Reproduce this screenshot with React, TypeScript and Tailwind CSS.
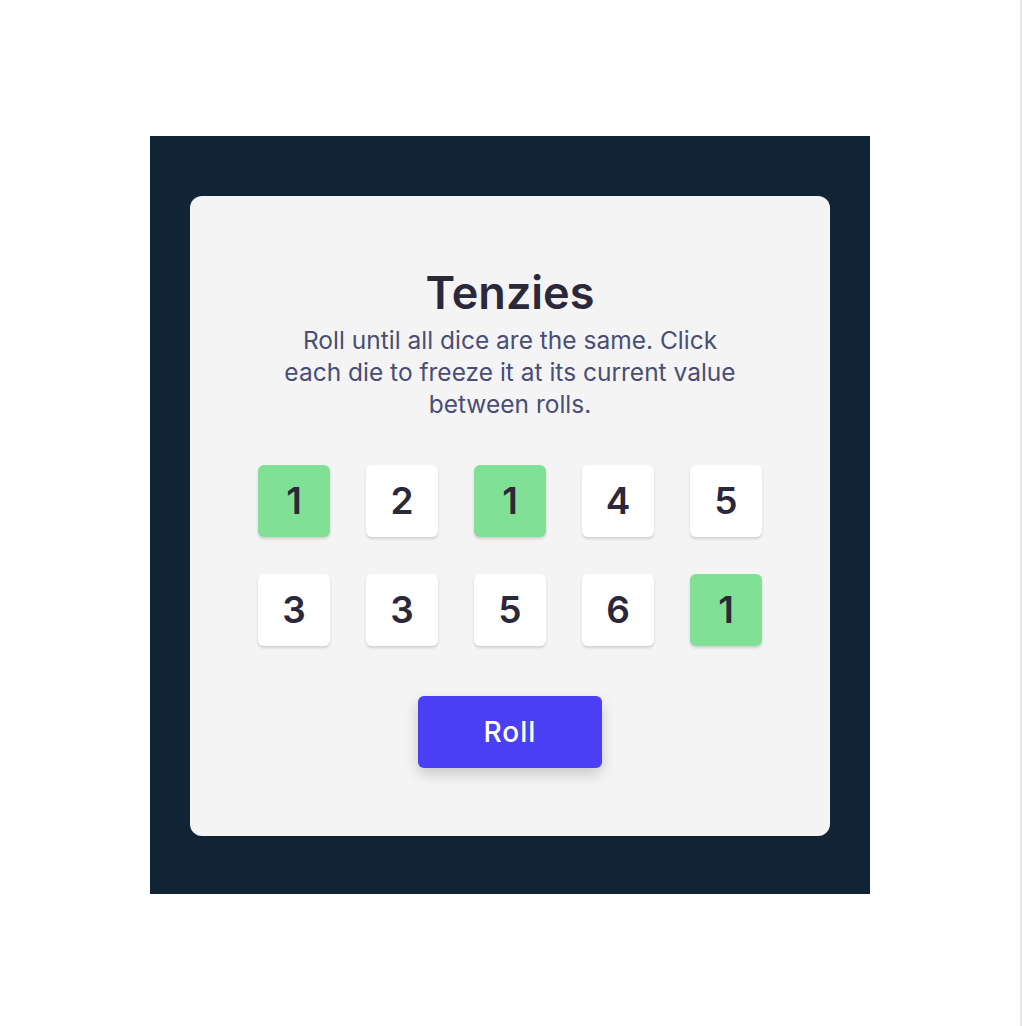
import React from 'react';

const dice = [
  { value: 1, held: true },
  { value: 2, held: false },
  { value: 1, held: true },
  { value: 4, held: false },
  { value: 5, held: false },
  { value: 3, held: false },
  { value: 3, held: false },
  { value: 5, held: false },
  { value: 6, held: false },
  { value: 1, held: true },
];

function Die({ value, held }: { value: number; held: boolean }) {
  return (
    <button
      className={
        'w-[72px] h-[72px] rounded-[6px] flex items-center justify-center text-[37px] font-semibold text-[#2b283a] shadow-[0_2px_3px_rgba(0,0,0,0.15)] ' +
        (held ? 'bg-[#80e096]' : 'bg-white')
      }
    >
      {value}
    </button>
  );
}

export default function App() {
  return (
    <div className="flex min-h-[1026px] bg-white font-['Inter',sans-serif]">
      <div className="flex-1 flex justify-center pt-[136px]">
        <main className="w-[720px] h-[758px] bg-[#112436] pt-[60px] px-[40px]">
          <div className="w-[640px] h-[640px] rounded-[12px] bg-[#f4f4f4] flex flex-col items-center pt-[69px]">
            <h1 className="text-[45px] leading-[56px] font-semibold text-[#2b283a]">Tenzies</h1>
            <p className="mt-[3px] w-[470px] text-center text-[24.5px] leading-[32px] text-[#4a4e74]">
              Roll until all dice are the same. Click each die to freeze it at its current value between rolls.
            </p>
            <div className="mt-[45px] grid grid-cols-5 gap-x-[36px] gap-y-[37px]">
              {dice.map((d, i) => (
                <Die key={i} value={d.value} held={d.held} />
              ))}
            </div>
            <button className="mt-[50px] w-[184px] h-[72px] rounded-[6px] bg-[#4a3ff5] text-white text-[28px] font-medium tracking-[1px] shadow-[0_6px_14px_rgba(0,0,0,0.18)]">
              Roll
            </button>
          </div>
        </main>
      </div>
      <div className="w-[2px] bg-[#e8e8e8]" />
    </div>
  );
}
